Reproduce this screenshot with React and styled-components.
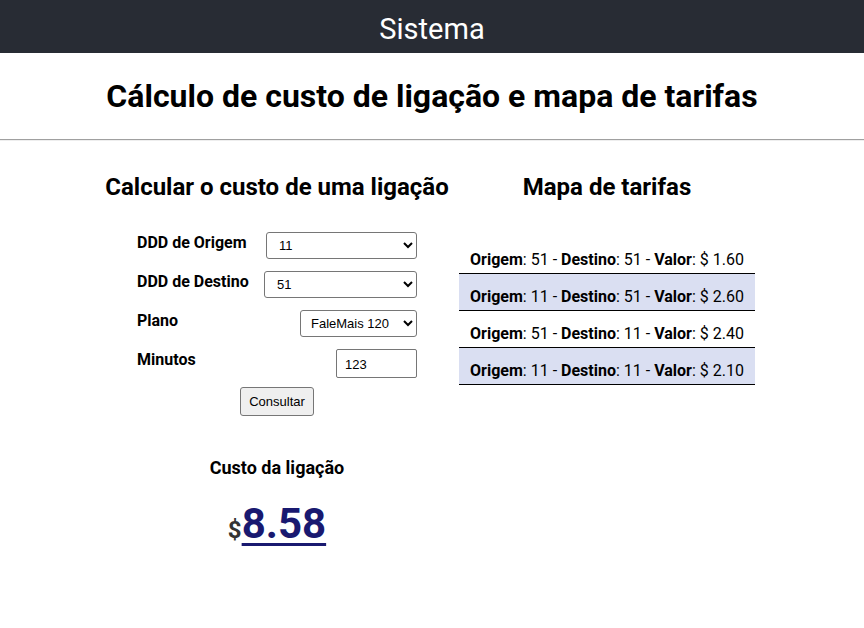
import styled, { createGlobalStyle } from 'styled-components';

const GlobalStyle = createGlobalStyle`
  body {
    margin: 0;
    font-family: Roboto, "Liberation Sans", sans-serif;
    background: #fff;
    color: #000;
  }
`;

const Header = styled.header`
  height: 53px;
  box-sizing: border-box;
  padding-top: 5px;
  background-color: #282c34;
  color: #fff;
  display: flex;
  align-items: center;
  justify-content: center;
  font-size: 29px;
`;

const Title = styled.h1`
  margin: 0;
  padding: 24px 0 24px;
  text-align: center;
  font-size: 32px;
  font-weight: 700;
`;

const Divider = styled.hr`
  margin: 0;
  border: none;
  border-top: 1px solid #a0a0a0;
  box-shadow: 0 1px 0 #eee;
`;

const Columns = styled.main`
  display: flex;
  justify-content: center;
  gap: 11px;
  padding: 33px 3px 0 0;
`;

const Column = styled.section`
  width: ${(p) => p.$width}px;
  display: flex;
  flex-direction: column;
  align-items: center;
`;

const Heading = styled.h2`
  margin: 0;
  font-size: 24px;
  font-weight: 700;
  white-space: nowrap;
`;

const Form = styled.form`
  width: 280px;
  margin-top: 31px;
  display: flex;
  flex-direction: column;
  gap: 12px;
`;

const Row = styled.div`
  display: flex;
  justify-content: space-between;
  align-items: flex-start;
  height: 27px;
`;

const Label = styled.label`
  font-size: 16px;
  font-weight: 700;
  line-height: 20px;
  padding-top: 1px;
`;

const Select = styled.select`
  width: ${(p) => p.$width}px;
  height: 27px;
  font-family: "Liberation Sans", Arial, sans-serif;
  font-size: 13px;
  padding: 0 4px 0 ${(p) => p.$pad || 8}px;
  border: 1px solid #767676;
  border-radius: 3px;
  background: #fff;
  color: #000;
`;

const Input = styled.input`
  width: 81px;
  height: 29px;
  box-sizing: border-box;
  font-family: "Liberation Sans", Arial, sans-serif;
  font-size: 13px;
  padding: 2px 8px 0;
  border: 1px solid #767676;
  border-radius: 2px;
`;

const Button = styled.button`
  align-self: center;
  margin-top: -1px;
  height: 29px;
  padding: 0 8px;
  font-family: "Liberation Sans", Arial, sans-serif;
  font-size: 13px;
  color: #000;
  background: #efefef;
  border: 1px solid #767676;
  border-radius: 3px;
`;

const Result = styled.div`
  margin-top: 41px;
  display: flex;
  flex-direction: column;
  align-items: center;
`;

const ResultLabel = styled.h3`
  margin: 0;
  font-size: 18px;
  font-weight: 700;
`;

const Price = styled.div`
  margin-top: 21px;
  font-weight: 700;
  display: flex;
  align-items: baseline;
`;

const Currency = styled.span`
  font-size: 24px;
  color: #333;
`;

const Amount = styled.span`
  font-size: 42px;
  color: #191970;
  text-decoration: underline;
  text-decoration-thickness: 3px;
  text-underline-offset: 5px;
`;

const Table = styled.div`
  width: 296px;
  margin-top: 36px;
`;

const TableRow = styled.div`
  height: 23px;
  padding-top: 13px;
  line-height: 19px;
  text-align: center;
  font-size: 16px;
  white-space: nowrap;
  border-bottom: 1px solid #000;
  background: ${(p) => (p.$alt ? '#dadff2' : '#fff')};
`;

const tarifas = [
  { origem: '51', destino: '51', valor: '1.60' },
  { origem: '11', destino: '51', valor: '2.60' },
  { origem: '51', destino: '11', valor: '2.40' },
  { origem: '11', destino: '11', valor: '2.10' },
];

const App = () => {
  return (
    <>
      <GlobalStyle />
      <Header>Sistema</Header>
      <Title>Cálculo de custo de ligação e mapa de tarifas</Title>
      <Divider />
      <Columns>
        <Column $width={342}>
          <Heading>Calcular o custo de uma ligação</Heading>
          <Form onSubmit={(e) => e.preventDefault()}>
            <Row>
              <Label>DDD de Origem</Label>
              <Select $width={151} defaultValue="11">
                <option value="11">11</option>
                <option value="51">51</option>
              </Select>
            </Row>
            <Row>
              <Label>DDD de Destino</Label>
              <Select $width={153} defaultValue="51">
                <option value="11">11</option>
                <option value="51">51</option>
              </Select>
            </Row>
            <Row>
              <Label>Plano</Label>
              <Select $width={117} $pad={6} defaultValue="120">
                <option value="30">FaleMais 30</option>
                <option value="60">FaleMais 60</option>
                <option value="120">FaleMais 120</option>
              </Select>
            </Row>
            <Row>
              <Label>Minutos</Label>
              <Input type="number" defaultValue="123" />
            </Row>
            <Button type="submit">Consultar</Button>
          </Form>
          <Result>
            <ResultLabel>Custo da ligação</ResultLabel>
            <Price>
              <Currency>$</Currency>
              <Amount>8.58</Amount>
            </Price>
          </Result>
        </Column>
        <Column $width={296}>
          <Heading>Mapa de tarifas</Heading>
          <Table>
            {tarifas.map((t, i) => (
              <TableRow key={i} $alt={i % 2 === 1}>
                <b>Origem</b>: {t.origem} - <b>Destino</b>: {t.destino} - <b>Valor</b>: $ {t.valor}
              </TableRow>
            ))}
          </Table>
        </Column>
      </Columns>
    </>
  );
};

export default App;
